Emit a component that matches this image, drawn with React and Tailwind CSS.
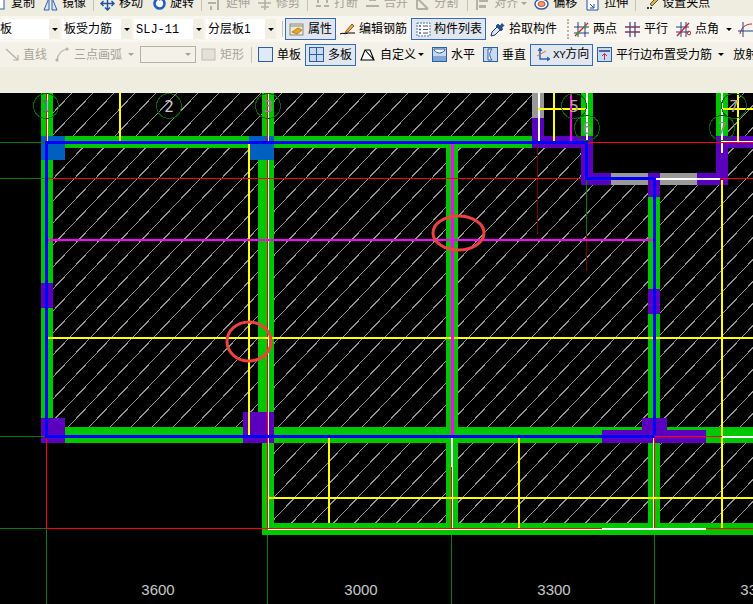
import React from "react";

const I = ({ children }) => (
  <svg width="15" height="15" viewBox="0 0 15 15" className="shrink-0 block">{children}</svg>
);

const Tool = ({ icon, label, className = "", gap = "gap-1", dim }) => (
  <div className={`flex items-center shrink-0 whitespace-nowrap ${gap} ${className}`}>
    {icon}
    <span className={dim ? "text-[#a5a297]" : "text-black"}>{label}</span>
  </div>
);

const Sep = ({ className = "" }) => <div className={`w-px h-[16px] bg-[#c5c2b8] shrink-0 ${className}`} />;

const Arrow = ({ className = "", dim }) => (
  <div
    className={`w-0 h-0 shrink-0 border-x-[3px] border-x-transparent border-t-[3px] ${
      dim ? "border-t-[#a5a297]" : "border-t-black"
    } ${className}`}
  />
);

const Combo = ({ className, children }) => (
  <div className={`h-[20px] bg-white flex items-center shrink-0 overflow-hidden ${className}`}>
    <span className="flex-1 whitespace-nowrap pl-[2px]">{children}</span>
    <div className="w-[11px] h-[20px] bg-[#f1efe4] flex items-center justify-center shrink-0">
      <Arrow />
    </div>
  </div>
);

const Pressed = ({ icon, label, className = "", gap = "gap-1" }) => (
  <div
    className={`flex items-center shrink-0 whitespace-nowrap border border-[#316ac5] bg-[#e1e6ef] h-[22px] ${gap} ${className}`}
  >
    {icon}
    <span>{label}</span>
  </div>
);

const Gray = "#b3b0a5";

const ic = {
  copy: <I><rect x="3" y="3" width="9" height="10" fill="#fff" stroke="#2f5fb0" /></I>,
  mirror: (
    <I>
      <path d="M6 2 L1 14 H6 Z" fill="#dbe6f7" stroke="#2f5fb0" />
      <path d="M9 2 L14 14 H9 Z" fill="#dbe6f7" stroke="#2f5fb0" />
    </I>
  ),
  move: (
    <I>
      <path d="M7.5 1V14M1 7.5H14M5 3.5L7.5 1L10 3.5M5 11.5L7.5 14L10 11.5M3.5 5L1 7.5L3.5 10M11.5 5L14 7.5L11.5 10" fill="none" stroke="#1f4fa8" strokeWidth="1.4" />
    </I>
  ),
  rotate: (
    <I>
      <circle cx="7.5" cy="7.5" r="5" fill="#fff" stroke="#1f5fc8" strokeWidth="2.6" />
      <path d="M7 1L11 3L7 5Z" fill="#e07020" />
    </I>
  ),
  extend: <I><path d="M1 7H9M11 1V14M4 1V4M4 10V14" stroke={Gray} strokeWidth="2" fill="none" /></I>,
  trim: <I><path d="M1 7H14M8 1V14M4 3H12M4 11H12" stroke={Gray} strokeWidth="1.6" fill="none" /></I>,
  brk: <I><path d="M1 10H6M9 10H14M3 4V7M12 4V7" stroke={Gray} strokeWidth="2" fill="none" /></I>,
  merge: <I><path d="M1 10H14M4 4H11" stroke={Gray} strokeWidth="2" fill="none" /></I>,
  split: <I><path d="M2 2L13 13M2 13H13M2 2V13" stroke={Gray} strokeWidth="2" fill="none" /></I>,
  align: <I><path d="M2 1V14" stroke={Gray} strokeWidth="2" /><rect x="4" y="3" width="9" height="3" fill={Gray} /><rect x="4" y="9" width="7" height="3" fill={Gray} /></I>,
  offset: (
    <I>
      <ellipse cx="7.5" cy="8" rx="6.5" ry="5" fill="#fff" stroke="#2f5fb0" strokeWidth="1.5" />
      <ellipse cx="7.5" cy="8" rx="3.5" ry="2.5" fill="#f0a080" stroke="#d04020" />
    </I>
  ),
  stretch: <I><path d="M2 1H10L13 4V14H2Z" fill="#fff" stroke="#1f4fa8" /><path d="M5 8L9 12M5 12H9V8" fill="none" stroke="#1f4fa8" /></I>,
  grip: <I><path d="M2 12H8" stroke="#000" strokeWidth="1.5" strokeDasharray="2 1" /><path d="M5 8L12 1L14 3L7 10Z" fill="#e0b040" stroke="#000" strokeWidth="0.6" /></I>,
  attr: (
    <I>
      <rect x="1" y="2" width="13" height="11" fill="#efe8d0" stroke="#8a8a80" />
      <path d="M1 4H14" stroke="#8a8a80" />
      <path d="M3 10L9 6L13 8L8 12Z" fill="#e8a820" stroke="#a06010" strokeWidth="0.7" />
    </I>
  ),
  edit: (
    <I>
      <path d="M0 12C3 10 5 13 8 11H15" fill="none" stroke="#000" />
      <path d="M6 9L12 2L14 4L8 10L5 11Z" fill="#e8b040" stroke="#803010" strokeWidth="0.8" />
    </I>
  ),
  list: (
    <I>
      <rect x="1" y="1" width="13" height="13" fill="#fff" stroke="#4a7ab0" strokeDasharray="2 1" />
      <path d="M3 4H5M3 7.5H5M3 11H5" stroke="#2f5fb0" strokeWidth="1.5" />
      <path d="M7 4H12M7 7.5H12M7 11H12" stroke="#555" strokeWidth="1" />
    </I>
  ),
  pick: (
    <I>
      <path d="M1 14L2 10L8 4L11 7L5 13Z" fill="#dbe6f7" stroke="#203060" />
      <path d="M8 2L10 4L12 1.5L14 3.5L11.5 6L13 7L11 9L6 4Z" fill="#2050a0" stroke="#102050" strokeWidth="0.6" />
    </I>
  ),
  two: (
    <I>
      <path d="M0 5H15M0 11H15M4 0V15M11 0V15" stroke="#27408b" strokeWidth="1" />
      <path d="M1 14L14 1" stroke="#d02020" strokeWidth="1.2" />
      <circle cx="4" cy="11" r="1.5" fill="#30a030" />
      <circle cx="11" cy="5" r="1.5" fill="#30a030" />
    </I>
  ),
  para: <I><path d="M0 5H15M0 10H15M5 0V15M10 0V15" stroke="#27408b" strokeWidth="1.2" /><path d="M0 5H15M0 10H15" stroke="#b03040" strokeWidth="1" /></I>,
  angle: (
    <I>
      <path d="M0 5H13M0 10H13M5 0V15M10 0V15" stroke="#27408b" strokeWidth="1" />
      <path d="M1 14L13 1" stroke="#d02020" strokeWidth="1.4" />
      <circle cx="13" cy="11" r="1.8" fill="none" stroke="#d02020" />
    </I>
  ),
  arc: <I><path d="M2 12C3 6 7 2 14 2" fill="none" stroke="#d02020" /><path d="M5 0V15M0 9H15" stroke="#27408b" /></I>,
  line: <I><path d="M1 2L13 13M13 8V13H8" fill="none" stroke={Gray} strokeWidth="1.2" /></I>,
  tarc: <I><path d="M2 13C3 7 7 3 12 2" fill="none" stroke={Gray} strokeWidth="1.2" /><circle cx="2" cy="13" r="1.6" fill={Gray} /><circle cx="12" cy="2" r="1.6" fill={Gray} /></I>,
  rect: <I><rect x="1" y="2" width="13" height="11" fill="#e3e1d8" stroke="#c0bdb2" /></I>,
  single: <I><rect x="0.5" y="0.5" width="14" height="14" fill="#dfeaf8" stroke="#2c5ea8" /></I>,
  multi: (
    <I>
      <rect x="0.5" y="0.5" width="14" height="14" fill="#c8daf0" stroke="#2c5ea8" />
      <path d="M7.5 0V15M0 7.5H15" stroke="#2c5ea8" />
    </I>
  ),
  custom: <I><path d="M1 13L5 3H10L14 13H1Z M5 3L14 13" fill="#fff" stroke="#000" strokeWidth="1.1" /></I>,
  hor: (
    <I>
      <rect x="0.5" y="0.5" width="14" height="14" fill="#c8daf0" stroke="#2c5ea8" />
      <path d="M2 3C5 7 10 7 13 3V2H2Z" fill="#fff" stroke="#2c5ea8" />
      <rect x="1" y="9" width="13" height="5" fill="#7ea6d8" />
    </I>
  ),
  ver: (
    <I>
      <rect x="0.5" y="0.5" width="14" height="14" fill="#c8daf0" stroke="#2c5ea8" />
      <path d="M5 2H9C6 6 6 9 9 13H5Z" fill="#fff" stroke="#2c5ea8" />
    </I>
  ),
  xy: (
    <I>
      <path d="M5 2V12H14" fill="none" stroke="#2f60c0" strokeWidth="1.5" />
      <path d="M3 4L5 1L7 4M12 10L15 12L12 14" fill="#2f60c0" stroke="#2f60c0" />
      <path d="M2 9L11 4" stroke="#d07a20" />
    </I>
  ),
  edge: (
    <I>
      <rect x="0.5" y="0.5" width="14" height="14" fill="#c8daf0" stroke="#2c5ea8" />
      <path d="M2 4H13" stroke="#1f3f80" strokeWidth="1.5" />
      <path d="M7.5 13V7M5 9L7.5 6.5L10 9" fill="none" stroke="#c03030" />
    </I>
  ),
};

const R = ({ x, y, x2, y2, f }) => <rect x={x} y={y} width={x2 - x} height={y2 - y} fill={f} />;

const GREEN = "#00c800";
const PURPLE = "#5c00c0";
const BLUE = "#0000ff";
const SQ = "#0060c0";
const GR = "#999999";
const Y = "#ffff00";
const M = "#ff00ff";
const RED = "#ff0000";
const W = "#ffffff";
const DG = "#008000";
const DR = "#800000";

const Axis = ({ cx, cy, t, c }) => (
  <g>
    <circle cx={cx} cy={cy} r="12.5" fill="none" stroke="#006400" strokeWidth="1" />
    <text x={cx} y={cy + 6} textAnchor="middle" fontSize="16" fill={c} fontFamily='"DejaVu Sans Mono", monospace'>
      {t}
    </text>
  </g>
);

const Dim = ({ x, t }) => (
  <text x={x} y={595} textAnchor="middle" fontSize="15" fill="#c8c8c8" fontFamily='"Liberation Sans", sans-serif'>
    {t}
  </text>
);

const Canvas = () => (
  <svg viewBox="0 93 753 511" className="block w-[753px] h-[511px] shrink-0" shapeRendering="crispEdges">
    <defs>
      <pattern id="hatch" patternUnits="userSpaceOnUse" x="8" y="6" width="21" height="22">
        <path d="M0 22L21 0" stroke="#949494" strokeWidth="1" fill="none" />
      </pattern>
    </defs>
    <rect x="0" y="93" width="753" height="511" fill="#000" />

    {/* slab hatching */}
    <R x={53} y={93} x2={532} y2={427} f="url(#hatch)" />
    <R x={532} y={148} x2={581} y2={427} f="url(#hatch)" />
    <R x={581} y={185} x2={753} y2={427} f="url(#hatch)" />
    <R x={728} y={93} x2={753} y2={185} f="url(#hatch)" />
    <R x={274} y={443} x2={753} y2={523} f="url(#hatch)" />

    {/* green walls */}
    <R x={41} y={93} x2={53} y2={420} f={GREEN} />
    <R x={41} y={136} x2={532} y2={148} f={GREEN} />
    <R x={262} y={93} x2={274} y2={136} f={GREEN} />
    <R x={258} y={160} x2={274} y2={412} f={GREEN} />
    <R x={446} y={144} x2={458} y2={530} f={GREEN} />
    <R x={581} y={93} x2={593} y2={136} f={GREEN} />
    <R x={716} y={93} x2={728} y2={136} f={GREEN} />
    <R x={648} y={197} x2={660} y2={523} f={GREEN} />
    <R x={65} y={427} x2={753} y2={443} f={GREEN} />
    <R x={262} y={443} x2={274} y2={535} f={GREEN} />
    <R x={262} y={523} x2={753} y2={535} f={GREEN} />

    {/* grey and purple */}
    <R x={532} y={93} x2={544} y2={118} f={GR} />
    <R x={532} y={118} x2={544} y2={148} f={PURPLE} />
    <R x={532} y={136} x2={593} y2={148} f={PURPLE} />
    <R x={581} y={136} x2={593} y2={185} f={PURPLE} />
    <R x={581} y={173} x2={611} y2={185} f={PURPLE} />
    <R x={611} y={173} x2={648} y2={185} f={GR} />
    <R x={648} y={173} x2={660} y2={197} f={PURPLE} />
    <R x={660} y={173} x2={697} y2={185} f={GR} />
    <R x={697} y={173} x2={728} y2={185} f={PURPLE} />
    <R x={716} y={136} x2={728} y2={185} f={PURPLE} />
    <R x={716} y={136} x2={753} y2={148} f={PURPLE} />
    <R x={41} y={283} x2={53} y2={308} f={PURPLE} />
    <R x={648} y={289} x2={660} y2={314} f={PURPLE} />
    <R x={41} y={418} x2={65} y2={443} f={PURPLE} />
    <R x={243} y={412} x2={274} y2={443} f={PURPLE} />
    <R x={642} y={418} x2={667} y2={430} f={PURPLE} />
    <R x={602} y={430} x2={706} y2={443} f={PURPLE} />

    {/* column caps */}
    <R x={41} y={136} x2={65} y2={160} f={SQ} />
    <R x={249} y={136} x2={274} y2={160} f={SQ} />

    {/* thin axis lines */}
    <R x={0} y={142} x2={45} y2={143} f={DG} />
    <R x={0} y={178} x2={45} y2={179} f={DG} />
    <R x={0} y={436} x2={45} y2={437} f={DG} />
    <R x={0} y={528} x2={46} y2={529} f={DG} />
    <R x={46} y={529} x2={47} y2={604} f={DG} />
    <R x={267} y={535} x2={268} y2={604} f={DG} />
    <R x={451} y={535} x2={452} y2={604} f={DG} />
    <R x={654} y={535} x2={655} y2={604} f={DG} />
    <R x={586} y={180} x2={587} y2={234} f={DG} />
    <R x={586} y={234} x2={587} y2={271} f={DR} />
    <R x={537} y={144} x2={538} y2={234} f={DR} />

    {/* white / red verticals */}
    <R x={46} y={93} x2={47} y2={141} f={RED} />
    <R x={47} y={93} x2={48} y2={141} f={W} />
    <R x={267} y={93} x2={268} y2={141} f={RED} />
    <R x={268} y={93} x2={269} y2={141} f={W} />
    <R x={267} y={160} x2={268} y2={529} f={RED} />
    <R x={268} y={160} x2={269} y2={529} f={W} />
    <R x={538} y={93} x2={540} y2={141} f={W} />
    <R x={586} y={93} x2={588} y2={141} f={W} />
    <R x={721} y={93} x2={723} y2={153} f={W} />
    <R x={451} y={438} x2={453} y2={467} f={W} />
    <R x={451} y={467} x2={452} y2={528} f={RED} />
    <R x={452} y={467} x2={453} y2={528} f={W} />
    <R x={46} y={438} x2={47} y2={528} f={RED} />
    <R x={654} y={438} x2={655} y2={528} f={RED} />
    <R x={653} y={438} x2={654} y2={528} f={W} />

    {/* yellow */}
    <R x={119} y={93} x2={121} y2={141} f={Y} />
    <R x={248} y={144} x2={250} y2={435} f={Y} />
    <R x={553} y={93} x2={555} y2={141} f={Y} />
    <R x={737} y={93} x2={739} y2={141} f={Y} />
    <R x={538} y={108} x2={586} y2={110} f={Y} />
    <R x={723} y={108} x2={753} y2={110} f={Y} />
    <R x={721} y={180} x2={723} y2={528} f={Y} />
    <R x={48} y={337} x2={753} y2={339} f={Y} />
    <R x={328} y={438} x2={330} y2={523} f={Y} />
    <R x={518} y={438} x2={520} y2={528} f={Y} />
    <R x={268} y={497} x2={753} y2={499} f={Y} />

    {/* magenta */}
    <R x={570} y={93} x2={572} y2={141} f={M} />
    <R x={48} y={239} x2={653} y2={241} f={M} />
    <R x={451} y={144} x2={454} y2={435} f={M} />

    {/* red horizontals */}
    <R x={48} y={178} x2={581} y2={179} f={RED} />
    <R x={660} y={178} x2={753} y2={179} f={RED} />
    <R x={588} y={142} x2={753} y2={143} f={RED} />
    <R x={723} y={141} x2={753} y2={142} f={W} />
    <R x={654} y={178} x2={720} y2={180} f={W} />
    <R x={655} y={436} x2={722} y2={437} f={RED} />
    <R x={722} y={436} x2={753} y2={438} f={W} />
    <R x={46} y={528} x2={602} y2={529} f={RED} />
    <R x={268} y={529} x2={602} y2={530} f={W} />
    <R x={602} y={528} x2={706} y2={530} f={W} />
    <R x={706} y={528} x2={753} y2={529} f={RED} />

    {/* blue */}
    <R x={45} y={141} x2={587} y2={144} f={BLUE} />
    <R x={45} y={141} x2={48} y2={435} f={BLUE} />
    <R x={585} y={141} x2={588} y2={178} f={BLUE} />
    <R x={585} y={177} x2={654} y2={180} f={BLUE} />
    <R x={653} y={178} x2={656} y2={435} f={BLUE} />
    <R x={45} y={435} x2={654} y2={438} f={BLUE} />

    {/* axis bubbles */}
    <Axis cx={46} cy={106} t="1" c="#6a6a6a" />
    <Axis cx={169} cy={106} t="2" c="#c8c8c8" />
    <Axis cx={268} cy={106} t="3" c="#b070b0" />
    <Axis cx={574} cy={106} t="5" c="#a8a8a8" />
    <Axis cx={587} cy={128} t="6" c="#8a8a8a" />
    <Axis cx={722} cy={128} t="7" c="#8a8a8a" />
    <Axis cx={734} cy={106} t="7" c="#a8a8a8" />

    {/* review marks */}
    <g shapeRendering="auto">
      <ellipse cx="458.5" cy="233" rx="25.5" ry="17" fill="none" stroke="#f04040" strokeWidth="3" />
      <ellipse cx="249" cy="341.5" rx="22" ry="19.5" fill="none" stroke="#f04040" strokeWidth="3" />
    </g>

    <g shapeRendering="auto">
      <Dim x={158} t="3600" />
      <Dim x={361} t="3000" />
      <Dim x={554} t="3300" />
      <Dim x={757} t="3300" />
    </g>
  </svg>
);

export default function App() {
  return (
    <div
      className="w-[753px] h-[604px] overflow-hidden flex flex-col bg-black text-[12px] leading-[16px] text-black"
      style={{ fontFamily: '"Liberation Sans", "Noto Sans CJK SC", sans-serif' }}
    >
      {/* row 1: cut off by the top of the shot */}
      <div className="h-[16px] overflow-hidden bg-[#efece0] shrink-0">
        <div className="flex items-center h-[16px] -mt-[5px]">
          <Tool className="-ml-[8px]" icon={ic.copy} label="复制" />
          <Tool className="ml-[8px]" icon={ic.mirror} label="镜像" />
          <Sep className="ml-[7px]" />
          <Tool className="ml-[6px]" icon={ic.move} label="移动" />
          <Tool className="ml-[9px]" gap="gap-[3px]" icon={ic.rotate} label="旋转" />
          <Sep className="ml-[7px]" />
          <Tool className="ml-[5px]" dim icon={ic.extend} label="延伸" />
          <Tool className="ml-[7px]" dim icon={ic.trim} label="修剪" />
          <Sep className="ml-[7px]" />
          <Tool className="ml-[7px]" dim icon={ic.brk} label="打断" />
          <Tool className="ml-[7px]" dim icon={ic.merge} label="合并" />
          <Tool className="ml-[7px]" dim icon={ic.split} label="分割" />
          <Sep className="ml-[9px]" />
          <Tool className="ml-[7px]" dim icon={ic.align} label="对齐" />
          <Arrow dim className="ml-[3px]" />
          <Tool className="ml-[7px]" icon={ic.offset} label="偏移" />
          <Tool className="ml-[8px]" icon={ic.stretch} label="拉伸" />
          <Sep className="ml-[7px]" />
          <Tool className="ml-[9px]" gap="gap-[2px]" icon={ic.grip} label="设置夹点" />
        </div>
      </div>

      {/* row 2 */}
      <div className="h-[26px] flex items-center bg-[#f8f6ef] shrink-0">
        <Combo className="w-[62px] -ml-[2px]">板</Combo>
        <Combo className="w-[70px] ml-[2px]">板受力筋</Combo>
        <Combo className="w-[70px] ml-[2px]">
          <span style={{ fontFamily: '"Liberation Mono", monospace' }}>SLJ-11</span>
        </Combo>
        <Combo className="w-[70px] ml-[2px]">分层板1</Combo>
        <Sep className="ml-[6px]" />
        <Pressed className="ml-[2px] w-[51px] pl-[3px]" icon={ic.attr} label="属性" />
        <Tool className="ml-[4px]" icon={ic.edit} label="编辑钢筋" />
        <Pressed className="ml-[4px] w-[75px] pl-[4px]" gap="gap-[3px]" icon={ic.list} label="构件列表" />
        <Tool className="ml-[4px]" icon={ic.pick} label="拾取构件" />
        <div className="ml-[10px] w-[2px] h-[20px] shrink-0 border-l-2 border-dotted border-[#b8b5a8]" />
        <Tool className="ml-[5px]" icon={ic.two} label="两点" />
        <Tool className="ml-[8px]" icon={ic.para} label="平行" />
        <Tool className="ml-[8px]" icon={ic.angle} label="点角" />
        <Arrow className="ml-[7px]" />
        <div className="ml-[6px] shrink-0">{ic.arc}</div>
      </div>

      {/* row 3 */}
      <div className="h-[25px] flex items-center bg-[#f4f2e8] pl-[5px] shrink-0">
        <Tool gap="gap-[3px]" dim icon={ic.line} label="直线" />
        <Tool className="ml-[8px]" dim icon={ic.tarc} label="三点画弧" />
        <Arrow dim className="ml-[6px]" />
        <div className="ml-[6px] w-[56px] h-[17px] border border-[#b5b2a5] bg-[#f4f2e8] flex items-center justify-end pr-[4px] shrink-0">
          <Arrow dim />
        </div>
        <Tool className="ml-[5px]" dim icon={ic.rect} label="矩形" />
        <Sep className="ml-[7px]" />
        <Tool className="ml-[6px]" icon={ic.single} label="单板" />
        <Pressed className="ml-[4px] w-[51px] pl-[3px]" icon={ic.multi} label="多板" />
        <Tool className="ml-[4px]" gap="gap-[5px]" icon={ic.custom} label="自定义" />
        <Arrow className="ml-[2px]" />
        <Tool className="ml-[8px]" icon={ic.hor} label="水平" />
        <Tool className="ml-[8px]" icon={ic.ver} label="垂直" />
        <Pressed
          className="ml-[4px] w-[63px] pl-[4px]"
          gap="gap-[3px]"
          icon={ic.xy}
          label={
            <>
              <span className="text-[11px] tracking-[-0.5px]" style={{ fontFamily: '"Liberation Mono", monospace' }}>XY</span>方向
            </>
          }
        />
        <Tool className="ml-[4px]" icon={ic.edge} label="平行边布置受力筋" />
        <Arrow className="ml-[6px]" />
        <span className="ml-[9px] shrink-0 whitespace-nowrap">放射筋</span>
      </div>

      <div className="h-[26px] bg-[#efece0] shrink-0" />
      <Canvas />
    </div>
  );
}
